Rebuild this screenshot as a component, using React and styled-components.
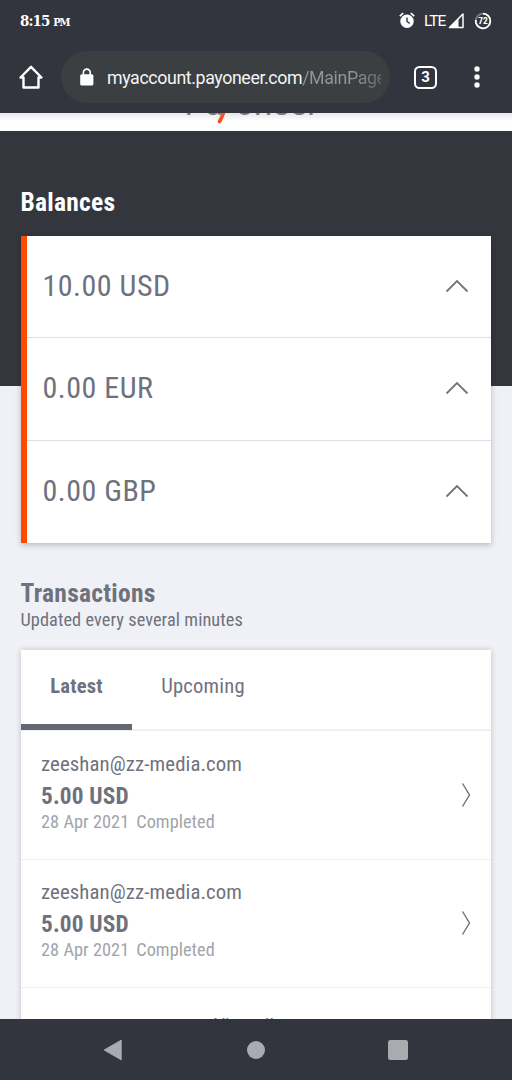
import React from 'react'
import styled, { createGlobalStyle } from 'styled-components'

const GlobalStyle = createGlobalStyle`
  * { box-sizing: border-box; }
  body {
    margin: 0;
    background: #f0f1f6;
    font-family: "Roboto Condensed", Roboto, sans-serif;
    font-stretch: 75%;
    color: #6f717d;
  }
`

const Screen = styled.div`
  width: 512px;
  height: 1080px;
  display: flex;
  flex-direction: column;
  overflow: hidden;
`

const StatusBar = styled.header`
  flex: none;
  height: 41px;
  padding: 0 20px;
  display: flex;
  align-items: center;
  justify-content: space-between;
  background: #32353d;
  color: #fff;
`

const Clock = styled.div`
  font: bold 15px/20px "DejaVu Serif Condensed", "DejaVu Serif", serif;
  font-stretch: condensed;
  letter-spacing: -0.9px;
  margin-top: 2px;

  small { font-size: 11px; letter-spacing: -1.2px; }
`

const StatusIcons = styled.div`
  display: flex;
  align-items: center;

  svg { display: block; }
`

const Network = styled.span`
  width: 24px;
  margin-left: 9px;
  font: 400 15.5px/20px Roboto, sans-serif;
  letter-spacing: -1px;
`

const Ring = styled.svg`
  margin-left: 9px;
`

const Toolbar = styled.div`
  flex: none;
  height: 72px;
  padding: 0 32px 0 18px;
  display: flex;
  align-items: center;
  background: #32353d;
`

const HomeIcon = styled.svg`
  display: block;
  margin-right: 17px;
`

const AddressBar = styled.div`
  width: 329px;
  height: 52px;
  padding: 0 9px 0 18px;
  border-radius: 26px;
  display: flex;
  align-items: center;
  background: #3b3f41;

  svg { flex: none; }
`

const Url = styled.div`
  flex: 1;
  margin-left: 12px;
  padding-top: 2px;
  overflow: hidden;
  white-space: nowrap;
  font: 400 17.8px/24px Roboto, sans-serif;
  letter-spacing: -0.39px;
  color: #f3f4f6;

  span {
    color: transparent;
    background: linear-gradient(90deg, #92959b 60%, #5c6065);
    background-clip: text;
  }
`

const TabCount = styled.div`
  width: 23px;
  height: 23px;
  margin-left: 24px;
  border: 2.5px solid #fff;
  border-radius: 5.5px;
  font: bold 15px/19px Roboto, sans-serif;
  text-align: center;
  color: #fff;
`

const MenuDots = styled.svg`
  margin-left: auto;
`

const LogoStrip = styled.div`
  flex: none;
  height: 18px;
  display: flex;
  align-items: flex-end;
  justify-content: center;
  overflow: hidden;
  background: linear-gradient(#e6e6ea, #fff 8px);
  padding-bottom: 7px;
`

const Logo = styled.div`
  display: flex;
  align-items: flex-end;
  margin-right: 9px;
  font: 400 33px/36px Roboto, sans-serif;
  color: #77777c;

  span { margin-bottom: 2px; }
  svg { margin: 0 5px 0 -9px; }
`

const Content = styled.main`
  flex: 1;
  min-height: 0;
  padding: 0 21px;
  overflow: hidden;
  background: linear-gradient(#33363d 255.5px, #f0f1f6 255.5px);
`

const Heading = styled.h2`
  margin: 0 0 0 -0.5px;
  font-size: 25.5px;
  line-height: 30px;
  font-weight: 700;
  letter-spacing: 0.25px;
  color: ${({ $light }) => ($light ? '#fff' : '#6f717d')};
`

const BalancesHeading = styled(Heading)`
  padding-top: 56px;
`

const BalanceCard = styled.section`
  height: 307px;
  margin-top: 19px;
  border-left: 6px solid #ff4800;
  display: grid;
  grid-template-rows: 101px 103px 103px;
  background: #fff;
  box-shadow: 0 2px 6px rgba(0, 0, 0, 0.24);
`

const BalanceRow = styled.div`
  padding: 0 22px 1px 15.5px;
  display: flex;
  align-items: center;
  justify-content: space-between;
  font-size: 30px;
  letter-spacing: 0.5px;

  & + & {
    padding-bottom: 2px;
    border-top: 1px solid #dedfe2;
  }

  span { margin-top: -1px; }
`

const Updated = styled.p`
  margin: 0 0 0 -0.5px;
  padding-top: 1px;
  font-size: 18.3px;
  line-height: 22px;
  letter-spacing: 0.08px;
`

const TransactionsHeader = styled.div`
  margin-top: 35px;
`

const TransactionCard = styled.section`
  height: 500px;
  margin-top: 19px;
  background: #fff;
  box-shadow: 0 0 6px rgba(0, 0, 0, 0.2);
`

const Tabs = styled.div`
  display: flex;
  height: 81px;
  border-bottom: 2px solid #eeeff1;
`

const Tab = styled.div`
  width: ${({ $active }) => ($active ? '111px' : '142px')};
  height: 80px;
  padding-top: 24px;
  text-align: center;
  font-size: 20.6px;
  line-height: 24px;
  letter-spacing: 0.2px;
  font-weight: ${({ $active }) => ($active ? 700 : 400)};
  border-bottom: ${({ $active }) => ($active ? '6px solid #656772' : 'none')};
`

const Transaction = styled.div`
  height: 128.5px;
  padding: 0 20px;
  display: flex;
  align-items: center;
  justify-content: space-between;
  border-bottom: 1px solid #ebecee;
`

const Details = styled.div`
  margin-top: -10px;
`

const Payee = styled.div`
  font-size: 20.8px;
  line-height: 32px;
  letter-spacing: 0.1px;
`

const Amount = styled.div`
  font-size: 23.3px;
  line-height: 32px;
  font-weight: 700;
  letter-spacing: 0.15px;
`

const Meta = styled.div`
  display: flex;
  gap: 7px;
  font-size: 18.3px;
  line-height: 20px;
  letter-spacing: 0.05px;
  color: #a3a4a9;
`

const ViewAll = styled.div`
  padding: 27px 0 0 193px;
  font-size: 19.5px;
  line-height: 23px;
`

const NavBar = styled.nav`
  flex: none;
  height: 61px;
  padding: 0 104px 0 103px;
  display: flex;
  align-items: center;
  justify-content: space-between;
  background: #32353d;
`

const balances = ['10.00 USD', '0.00 EUR', '0.00 GBP']

const transactions = [
  { id: 1, payee: 'zeeshan@zz-media.com', amount: '5.00 USD', date: '28 Apr 2021', status: 'Completed' },
  { id: 2, payee: 'zeeshan@zz-media.com', amount: '5.00 USD', date: '28 Apr 2021', status: 'Completed' },
]

export default function App() {
  return (
    <Screen>
      <GlobalStyle />
      <StatusBar>
        <Clock>8:15 <small>PM</small></Clock>
        <StatusIcons>
          <svg width="16" height="17" viewBox="0 0 16 17">
            <circle cx="8" cy="9.3" r="6.7" fill="#fff" />
            <path d="M.8 4.2 4.2 1.2M15.2 4.2l-3.4-3" stroke="#fff" strokeWidth="1.7" />
            <path d="M8 5.5v4l2.7 1.8" stroke="#32353d" strokeWidth="1.4" fill="none" />
          </svg>
          <Network>LTE</Network>
          <svg width="17" height="17" viewBox="0 0 17 17">
            <path d="M1.5 15.5 15 2v13.5Z" fill="none" stroke="#fff" strokeWidth="1.5" strokeLinejoin="round" />
            <path d="M1.5 15.5 10.5 6.5v9Z" fill="#fff" />
          </svg>
          <Ring width="18" height="18" viewBox="0 0 18 18">
            <circle cx="9" cy="9" r="7.3" fill="none" stroke="#777a80" strokeWidth="1.8" />
            <path d="M9 1.7A7.3 7.3 0 1 1 1.8 7.8" fill="none" stroke="#fff" strokeWidth="1.8" />
            <text x="9" y="12.4" textAnchor="middle" fill="#fff" fontFamily="Roboto, sans-serif" fontSize="9.5" fontWeight="700">72</text>
          </Ring>
        </StatusIcons>
      </StatusBar>

      <Toolbar>
        <HomeIcon width="26" height="26" viewBox="0 0 26 26" fill="none" stroke="#fff" strokeWidth="2.4" strokeLinejoin="round">
          <path d="M2.5 13.5 13 2.8l10.5 10.7h-3v10h-15v-10Z" />
        </HomeIcon>
        <AddressBar>
          <svg width="16" height="18" viewBox="0 0 16 18">
            <rect x="1.2" y="6.2" width="13.2" height="11.3" rx="1.6" fill="#fff" />
            <path d="M4.4 7V4.5a3.4 3.4 0 0 1 6.8 0V7" fill="none" stroke="#fff" strokeWidth="1.6" />
          </svg>
          <Url>myaccount.payoneer.com<span>/MainPage</span></Url>
        </AddressBar>
        <TabCount>3</TabCount>
        <MenuDots width="6" height="22" viewBox="0 0 6 22" fill="#fff">
          <circle cx="3" cy="3" r="2.7" />
          <circle cx="3" cy="11" r="2.7" />
          <circle cx="3" cy="19" r="2.7" />
        </MenuDots>
      </Toolbar>

      <LogoStrip>
        <Logo>
          <span>Pa</span>
          <svg width="16" height="26" viewBox="0 0 16 26">
            <path d="M12.5 2Q11 14 5.5 23.5" fill="none" stroke="#f4511e" strokeWidth="3.6" strokeLinecap="round" />
          </svg>
          <span>oneer</span>
        </Logo>
      </LogoStrip>

      <Content>
        <BalancesHeading $light>Balances</BalancesHeading>
        <BalanceCard>
          {balances.map((balance) => (
            <BalanceRow key={balance}>
              <span>{balance}</span>
              <svg width="24" height="14" viewBox="0 0 24 14" fill="none" stroke="#73757d" strokeWidth="1.8">
                <path d="M1.5 12.5 12 2l10.5 10.5" />
              </svg>
            </BalanceRow>
          ))}
        </BalanceCard>

        <TransactionsHeader>
          <Heading>Transactions</Heading>
          <Updated>Updated every several minutes</Updated>
        </TransactionsHeader>
        <TransactionCard>
          <Tabs>
            <Tab $active>Latest</Tab>
            <Tab>Upcoming</Tab>
          </Tabs>
          {transactions.map((item) => (
            <Transaction key={item.id}>
              <Details>
                <Payee>{item.payee}</Payee>
                <Amount>{item.amount}</Amount>
                <Meta>
                  <span>{item.date}</span>
                  <span>{item.status}</span>
                </Meta>
              </Details>
              <svg width="10" height="26" viewBox="0 0 10 26" fill="none" stroke="#6f717d" strokeWidth="1.4">
                <path d="M1.5 1.5 8.5 13l-7 11.5" />
              </svg>
            </Transaction>
          ))}
          <ViewAll>View all</ViewAll>
        </TransactionCard>
      </Content>

      <NavBar>
        <svg width="20" height="22" viewBox="0 0 20 22">
          <path d="M1.2 11 18.2 1.2v19.6Z" fill="#a9abb1" stroke="#a9abb1" strokeLinejoin="round" />
        </svg>
        <svg width="18" height="18" viewBox="0 0 18 18">
          <circle cx="9" cy="9" r="9" fill="#a9abb1" />
        </svg>
        <svg width="20" height="20" viewBox="0 0 20 20">
          <rect width="20" height="20" rx="2.5" fill="#a9abb1" />
        </svg>
      </NavBar>
    </Screen>
  )
}
